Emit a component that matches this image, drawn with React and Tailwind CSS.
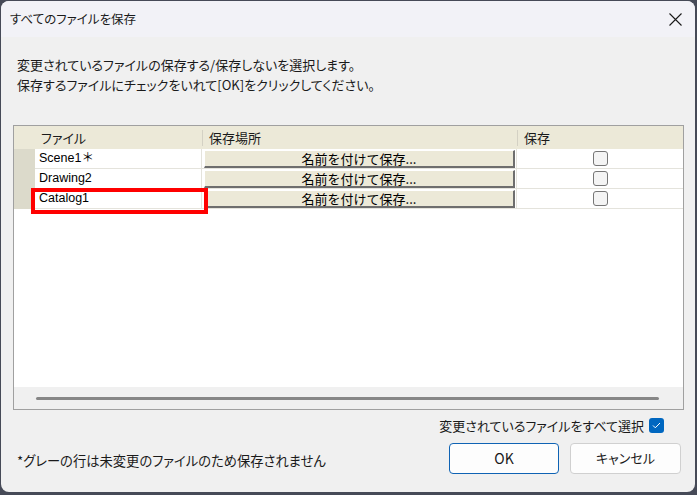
import React from "react";

const rows = ["Scene1＊", "Drawing2", "Catalog1"];

const Checkbox = () => (
  <div className="w-[15px] h-[15px] rounded-[3px] border border-[#767676] bg-[#f4f4f4]" />
);

const App = () => {
  return (
    <div className="w-[697px] h-[495px] bg-[#464a57] pl-[1px] pt-[1px] font-['Noto_Sans_CJK_JP',sans-serif] text-[#1a1a1a]">
      <div className="w-[694px] h-[491px] rounded-lg overflow-hidden flex flex-col bg-[#f0f0f0]">
        {/* title bar */}
        <div className="h-[36px] shrink-0 bg-[#f2f2f7] flex items-center justify-between pl-[9px] pr-[13px]">
          <span className="text-[12.5px] [font-feature-settings:'palt'] leading-none">すべてのファイルを保存</span>
          <svg width="13" height="13" viewBox="0 0 13 13" className="text-[#1a1a1a]">
            <path d="M0.5 0.5 L12.5 12.5 M12.5 0.5 L0.5 12.5" stroke="currentColor" strokeWidth="1.1" fill="none" />
          </svg>
        </div>

        {/* body */}
        <div className="flex-1 flex flex-col">
          <div className="pl-[16px] pt-[18px] text-[13px] leading-[20px] [font-feature-settings:'palt']">
            <p>変更されているファイルの保存する/保存しないを選択します。</p>
            <p>保存するファイルにチェックをいれて[OK]をクリックしてください。</p>
          </div>

          {/* grid */}
          <div className="relative ml-[12px] mt-[30px] w-[671px] h-[285px] border border-[#a0a0a0] flex flex-col bg-white">
            {/* header */}
            <div className="h-[23px] shrink-0 bg-[#ece9d8] flex text-[13px] [font-feature-settings:'palt']">
              <div className="w-[21px]" />
              <div className="w-[167px] flex items-center pl-[6px]">ファイル</div>
              <div className="w-[315px] flex items-center">
                <div className="w-px h-[16px] bg-[#d4d1c4]" />
                <span className="pl-[6px]">保存場所</span>
              </div>
              <div className="flex-1 flex items-center">
                <div className="w-px h-[16px] bg-[#d4d1c4]" />
                <span className="pl-[6px]">保存</span>
              </div>
            </div>

            {rows.map((name) => (
              <div key={name} className="h-[20px] shrink-0 flex">
                <div className="w-[21px] bg-[#dcdacb]" />
                <div className="w-[167px] border-b border-r border-[#e4e3dc] flex items-center pl-[4px] text-[12.5px] font-['Liberation_Sans','Noto_Sans_CJK_JP',sans-serif] text-black">
                  {name}
                </div>
                <div className="w-[315px] border-b border-r border-[#e4e3dc] pl-[2px] pr-[1px] pt-[1px]">
                  <div className="h-[18px] bg-[#ece9d8] border-t border-l border-white border-b-2 border-r-2 border-b-[#6e6e6e] border-r-[#6e6e6e] flex items-center justify-center text-[13px] leading-none text-black">
                    名前を付けて保存...
                  </div>
                </div>
                <div className="flex-1 border-b border-[#e4e3dc] flex items-center justify-center">
                  <Checkbox />
                </div>
              </div>
            ))}

            <div className="flex-1" />

            {/* horizontal scrollbar */}
            <div className="h-[22px] shrink-0 bg-[#f0f0f0] flex items-center pl-[22px] pr-[24px]">
              <div className="h-[3px] w-full rounded-full bg-[#868686]" />
            </div>

            {/* highlight */}
            <div className="absolute left-[17px] top-[62px] w-[177px] h-[26px] border-4 border-[#ff0000]" />
          </div>

          {/* select all */}
          <div className="mt-[6px] pr-[31px] flex items-center justify-end gap-[5px] text-[13px] [font-feature-settings:'palt']">
            <span>変更されているファイルをすべて選択</span>
            <div className="w-[15px] h-[15px] rounded-[3px] bg-[#0067c0] flex items-center justify-center">
              <svg width="9" height="7" viewBox="0 0 9 7">
                <path d="M1 3.5 L3.3 5.8 L8 1" stroke="white" strokeWidth="1" fill="none" />
              </svg>
            </div>
          </div>

          {/* footer */}
          <div className="mt-[7px] pl-[16px] pr-[14px] flex items-center justify-between">
            <span className="text-[13.3px] [font-feature-settings:'palt'] pt-[6px]">*グレーの行は未変更のファイルのため保存されません</span>
            <div className="flex gap-[11px]">
              <button className="w-[110px] h-[31px] rounded-[4px] border border-[#0f63b4] bg-[#fdfdfd] text-[14px]">
                OK
              </button>
              <button className="w-[111px] h-[31px] rounded-[4px] border border-[#d0d0d0] bg-[#fdfdfd] text-[13px] [font-feature-settings:'palt']">
                キャンセル
              </button>
            </div>
          </div>
        </div>
      </div>
    </div>
  );
};

export default App;
